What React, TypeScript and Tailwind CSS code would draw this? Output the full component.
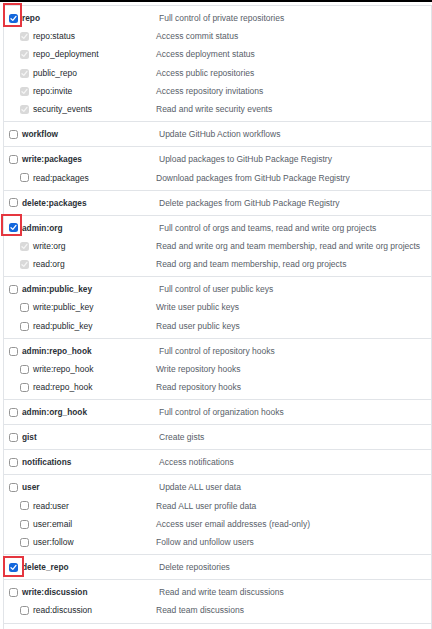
import React from "react";

type Scope = { name: string; desc: string };
type Mark = { top: number; height: number; left: number; width: number };
type Group = Scope & { checked?: boolean; mark?: Mark; children?: Scope[] };

const groups: Group[] = [
  {
    name: "repo",
    desc: "Full control of private repositories",
    checked: true,
    mark: { top: -6, height: 24, left: -1, width: 19 },
    children: [
      { name: "repo:status", desc: "Access commit status" },
      { name: "repo_deployment", desc: "Access deployment status" },
      { name: "public_repo", desc: "Access public repositories" },
      { name: "repo:invite", desc: "Access repository invitations" },
      { name: "security_events", desc: "Read and write security events" },
    ],
  },
  { name: "workflow", desc: "Update GitHub Action workflows" },
  {
    name: "write:packages",
    desc: "Upload packages to GitHub Package Registry",
    children: [{ name: "read:packages", desc: "Download packages from GitHub Package Registry" }],
  },
  { name: "delete:packages", desc: "Delete packages from GitHub Package Registry" },
  {
    name: "admin:org",
    desc: "Full control of orgs and teams, read and write org projects",
    checked: true,
    mark: { top: -5, height: 22, left: -3, width: 21 },
    children: [
      { name: "write:org", desc: "Read and write org and team membership, read and write org projects" },
      { name: "read:org", desc: "Read org and team membership, read org projects" },
    ],
  },
  {
    name: "admin:public_key",
    desc: "Full control of user public keys",
    children: [
      { name: "write:public_key", desc: "Write user public keys" },
      { name: "read:public_key", desc: "Read user public keys" },
    ],
  },
  {
    name: "admin:repo_hook",
    desc: "Full control of repository hooks",
    children: [
      { name: "write:repo_hook", desc: "Write repository hooks" },
      { name: "read:repo_hook", desc: "Read repository hooks" },
    ],
  },
  { name: "admin:org_hook", desc: "Full control of organization hooks" },
  { name: "gist", desc: "Create gists" },
  { name: "notifications", desc: "Access notifications" },
  {
    name: "user",
    desc: "Update ALL user data",
    children: [
      { name: "read:user", desc: "Read ALL user profile data" },
      { name: "user:email", desc: "Access user email addresses (read-only)" },
      { name: "user:follow", desc: "Follow and unfollow users" },
    ],
  },
  {
    name: "delete_repo",
    desc: "Delete repositories",
    checked: true,
    mark: { top: -2.5, height: 21, left: -1, width: 21 },
  },
  {
    name: "write:discussion",
    desc: "Read and write team discussions",
    children: [{ name: "read:discussion", desc: "Read team discussions" }],
  },
];

function Box({ state }: { state: "on" | "off" | "inherited" }) {
  if (state === "off") {
    return <span className="block w-[9px] h-[9px] shrink-0 rounded-[2.5px] border border-[#959595] bg-white" />;
  }
  const fill = state === "on" ? "bg-[#1467dc]" : "bg-[#d9d9d9]";
  const stroke = state === "on" ? "#ffffff" : "#f5f5f5";
  return (
    <span className={`flex w-[9px] h-[9px] shrink-0 rounded-[2.5px] ${fill} items-center justify-center`}>
      <svg width="9" height="9" viewBox="0 0 9 9">
        <path d="M2 4.7 L3.8 6.4 L7 2.4" fill="none" stroke={stroke} strokeWidth="1.3" strokeLinecap="round" strokeLinejoin="round" />
      </svg>
    </span>
  );
}

export default function App() {
  return (
    <div
      className="w-[432px] h-[629px] bg-white overflow-hidden text-[8.5px] leading-none"
      style={{ fontFamily: '"Liberation Sans", Arial, sans-serif' }}
    >
      <div className="h-[2px] bg-black" />
      <div className="h-[3px]" />
      <div className="ml-[3px] w-[429px] border-l border-r border-[#e1e4e8]">
        {groups.map((g) => (
          <div key={g.name} className="border-t border-[#e1e4e8] pt-[3px] pb-[2.7px]">
            <div className="relative flex items-center h-[18.3px]">
              {g.mark && (
                <span
                  className="absolute border-2 border-[#e5363f]"
                  style={{ top: g.mark.top, height: g.mark.height, left: g.mark.left, width: g.mark.width }}
                />
              )}
              <div className="flex items-center w-[155px] pl-[5px] gap-[4px]">
                <Box state={g.checked ? "on" : "off"} />
                <span className="font-bold text-[#2b3137] text-[8.3px]">{g.name}</span>
              </div>
              <span className="text-[#586069] whitespace-nowrap">{g.desc}</span>
            </div>
            {g.children?.map((c) => (
              <div key={c.name} className="flex items-center h-[18.3px]">
                <div className="flex items-center w-[152px] pl-[16px] gap-[4px]">
                  <Box state={g.checked ? "inherited" : "off"} />
                  <span className="text-[#24292e]">{c.name}</span>
                </div>
                <span className="text-[#586069] whitespace-nowrap">{c.desc}</span>
              </div>
            ))}
          </div>
        ))}
        <div className="border-t border-[#e1e4e8] h-[20px]" />
      </div>
    </div>
  );
}
